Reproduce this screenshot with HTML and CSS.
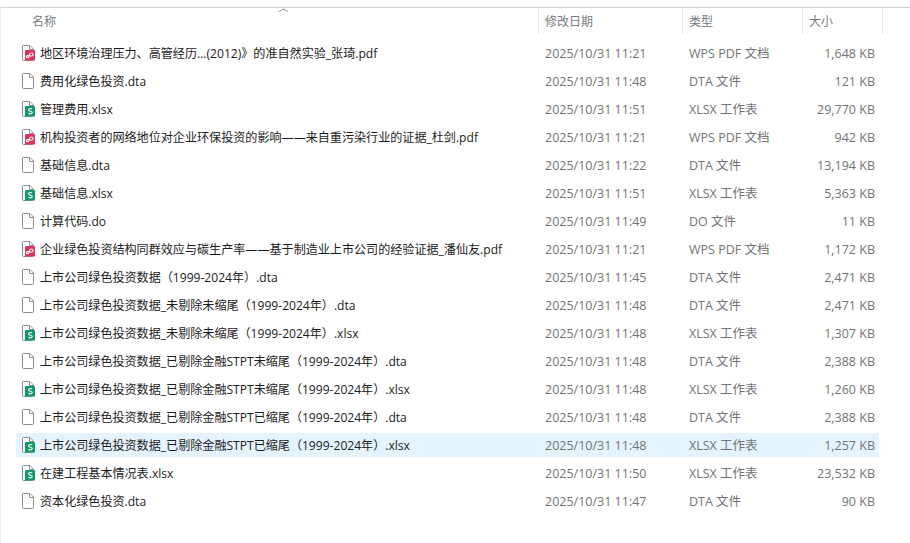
FILE: index.html
```html
<!DOCTYPE html>
<html lang="zh-CN">
<head>
  <meta charset="UTF-8">
  <title>文件列表</title>
  <link rel="stylesheet" href="styles.css">
</head>
<body>
  <svg class="defs" width="0" height="0">
    <symbol id="page" viewBox="0 0 14 16">
      <path d="M1.500 1.500a1 1 0 0 1 1-1H9L12.500 4v10.500a1 1 0 0 1-1 1h-9a1 1 0 0 1-1-1z" fill="#fff" stroke="#8e8e8e"/>
      <path d="M8.500 .5V4.500h4" fill="none" stroke="#8e8e8e"/>
    </symbol>
    <symbol id="pdf" viewBox="0 0 14 16">
      <path d="M1.500 1.500a1 1 0 0 1 1-1H9L12.500 4v10.500a1 1 0 0 1-1 1h-9a1 1 0 0 1-1-1z" fill="#fff" stroke="#8e8e8e"/>
      <path d="M8.500 .5V4.500h4" fill="none" stroke="#8e8e8e"/>
      <rect x="4" y="5" width="10" height="10.500" rx="1" fill="#e5305f"/>
      <path d="M6.500 12.800c1.600 0 1.800-1.600 2-3 .2-1 1-1.800 2-1.800s1.600.7 1.600 1.500-.7 1.500-1.600 1.500H8M6.500 12.800c-.8 0-1.200-.5-1.200-1.100s.5-1.100 1.200-1.100h1.500" fill="none" stroke="#fff" stroke-width="1.100"/>
    </symbol>
    <symbol id="xls" viewBox="0 0 14 16">
      <path d="M1.500 1.500a1 1 0 0 1 1-1H9L12.500 4v10.500a1 1 0 0 1-1 1h-9a1 1 0 0 1-1-1z" fill="#fff" stroke="#8e8e8e"/>
      <path d="M8.500 .5V4.500h4" fill="none" stroke="#8e8e8e"/>
      <rect x="4" y="5" width="10" height="10.500" rx="1" fill="#12996a"/>
      <path d="M11 8.100c-.4-.4-1-.6-1.700-.6-1 0-1.700.5-1.700 1.300 0 1.800 3.600 1 3.600 2.800 0 .8-.8 1.300-1.800 1.300-.8 0-1.500-.3-1.900-.8" fill="none" stroke="#fff" stroke-width="1.100"/>
    </symbol>
  </svg>

  <div class="window">
    <div class="header">
      <div class="col-name head-cell">名称<span class="sort"></span></div>
      <div class="col-date head-cell">修改日期</div>
      <div class="col-type head-cell">类型</div>
      <div class="col-size head-cell">大小</div>
    </div>

    <div class="rows">
      <div class="row">
        <div class="col-name"><svg class="icon"><use href="#pdf"/></svg>地区环境治理压力、高管经历...(2012)》的准自然实验_张琦.pdf</div>
        <div class="col-date">2025/10/31 11:21</div>
        <div class="col-type">WPS PDF 文档</div>
        <div class="col-size">1,648 KB</div>
      </div>
      <div class="row">
        <div class="col-name"><svg class="icon"><use href="#page"/></svg>费用化绿色投资.dta</div>
        <div class="col-date">2025/10/31 11:48</div>
        <div class="col-type">DTA 文件</div>
        <div class="col-size">121 KB</div>
      </div>
      <div class="row">
        <div class="col-name"><svg class="icon"><use href="#xls"/></svg>管理费用.xlsx</div>
        <div class="col-date">2025/10/31 11:51</div>
        <div class="col-type">XLSX 工作表</div>
        <div class="col-size">29,770 KB</div>
      </div>
      <div class="row">
        <div class="col-name"><svg class="icon"><use href="#pdf"/></svg>机构投资者的网络地位对企业环保投资的影响——来自重污染行业的证据_杜剑.pdf</div>
        <div class="col-date">2025/10/31 11:21</div>
        <div class="col-type">WPS PDF 文档</div>
        <div class="col-size">942 KB</div>
      </div>
      <div class="row">
        <div class="col-name"><svg class="icon"><use href="#page"/></svg>基础信息.dta</div>
        <div class="col-date">2025/10/31 11:22</div>
        <div class="col-type">DTA 文件</div>
        <div class="col-size">13,194 KB</div>
      </div>
      <div class="row">
        <div class="col-name"><svg class="icon"><use href="#xls"/></svg>基础信息.xlsx</div>
        <div class="col-date">2025/10/31 11:51</div>
        <div class="col-type">XLSX 工作表</div>
        <div class="col-size">5,363 KB</div>
      </div>
      <div class="row">
        <div class="col-name"><svg class="icon"><use href="#page"/></svg>计算代码.do</div>
        <div class="col-date">2025/10/31 11:49</div>
        <div class="col-type">DO 文件</div>
        <div class="col-size">11 KB</div>
      </div>
      <div class="row">
        <div class="col-name"><svg class="icon"><use href="#pdf"/></svg>企业绿色投资结构同群效应与碳生产率——基于制造业上市公司的经验证据_潘仙友.pdf</div>
        <div class="col-date">2025/10/31 11:21</div>
        <div class="col-type">WPS PDF 文档</div>
        <div class="col-size">1,172 KB</div>
      </div>
      <div class="row">
        <div class="col-name"><svg class="icon"><use href="#page"/></svg>上市公司绿色投资数据（1999-2024年）.dta</div>
        <div class="col-date">2025/10/31 11:45</div>
        <div class="col-type">DTA 文件</div>
        <div class="col-size">2,471 KB</div>
      </div>
      <div class="row">
        <div class="col-name"><svg class="icon"><use href="#page"/></svg>上市公司绿色投资数据_未剔除未缩尾（1999-2024年）.dta</div>
        <div class="col-date">2025/10/31 11:48</div>
        <div class="col-type">DTA 文件</div>
        <div class="col-size">2,471 KB</div>
      </div>
      <div class="row">
        <div class="col-name"><svg class="icon"><use href="#xls"/></svg>上市公司绿色投资数据_未剔除未缩尾（1999-2024年）.xlsx</div>
        <div class="col-date">2025/10/31 11:48</div>
        <div class="col-type">XLSX 工作表</div>
        <div class="col-size">1,307 KB</div>
      </div>
      <div class="row">
        <div class="col-name"><svg class="icon"><use href="#page"/></svg>上市公司绿色投资数据_已剔除金融STPT未缩尾（1999-2024年）.dta</div>
        <div class="col-date">2025/10/31 11:48</div>
        <div class="col-type">DTA 文件</div>
        <div class="col-size">2,388 KB</div>
      </div>
      <div class="row">
        <div class="col-name"><svg class="icon"><use href="#xls"/></svg>上市公司绿色投资数据_已剔除金融STPT未缩尾（1999-2024年）.xlsx</div>
        <div class="col-date">2025/10/31 11:48</div>
        <div class="col-type">XLSX 工作表</div>
        <div class="col-size">1,260 KB</div>
      </div>
      <div class="row">
        <div class="col-name"><svg class="icon"><use href="#page"/></svg>上市公司绿色投资数据_已剔除金融STPT已缩尾（1999-2024年）.dta</div>
        <div class="col-date">2025/10/31 11:48</div>
        <div class="col-type">DTA 文件</div>
        <div class="col-size">2,388 KB</div>
      </div>
      <div class="row selected">
        <div class="col-name"><svg class="icon"><use href="#xls"/></svg>上市公司绿色投资数据_已剔除金融STPT已缩尾（1999-2024年）.xlsx</div>
        <div class="col-date">2025/10/31 11:48</div>
        <div class="col-type">XLSX 工作表</div>
        <div class="col-size">1,257 KB</div>
      </div>
      <div class="row">
        <div class="col-name"><svg class="icon"><use href="#xls"/></svg>在建工程基本情况表.xlsx</div>
        <div class="col-date">2025/10/31 11:50</div>
        <div class="col-type">XLSX 工作表</div>
        <div class="col-size">23,532 KB</div>
      </div>
      <div class="row">
        <div class="col-name"><svg class="icon"><use href="#page"/></svg>资本化绿色投资.dta</div>
        <div class="col-date">2025/10/31 11:47</div>
        <div class="col-type">DTA 文件</div>
        <div class="col-size">90 KB</div>
      </div>
    </div>
  </div>
</body>
</html>
```

FILE: styles.css
```css
html, body {
  margin: 0;
  height: 100%;
  background: #fff;
}
body {
  font-family: "Open Sans", "Noto Sans CJK SC", sans-serif;
  font-size: 12.5px;
  line-height: 16px;
  color: #1c1c1c;
  overflow: hidden;
}
.defs {
  position: absolute;
}
.window {
  margin-top: 7px;
  height: 536px;
  box-sizing: border-box;
  border-top: 1px solid #ccd3d6;
  border-left: 1px solid #f0f0f0;
  padding-left: 15px;
}
.header {
  display: flex;
  height: 26px;
  width: 867px;
  color: #767b82;
  font-size: 12px;
}
.head-cell {
  display: flex;
  align-items: center;
  position: relative;
  padding-top: 2px;
  border-right: 1px solid #e8e8e8;
}
.header .col-name {
  width: 523px;
  padding-left: 16px;
  color: #767b82;
}
.header .col-date,
.header .col-type,
.header .col-size {
  padding-left: 6px;
}
.sort {
  position: absolute;
  left: 264px;
  top: 0;
  width: 6px;
  height: 6px;
  border-top: 1px solid #8a8a8a;
  border-left: 1px solid #8a8a8a;
  transform: scaleY(0.6) rotate(45deg);
}
.rows {
  display: flex;
  flex-direction: column;
  gap: 4px;
  margin-top: 7px;
}
.row {
  display: flex;
  align-items: center;
  height: 24px;
  box-sizing: border-box;
  padding-top: 2px;
  width: 863px;
  color: #737373;
  white-space: nowrap;
}
.row.selected {
  background: #e5f3ff;
}
.col-name {
  width: 522px;
  box-sizing: border-box;
  display: flex;
  align-items: center;
  color: #1c1c1c;
  font-size: 12.08px;
}
.row .col-name {
  padding-left: 5px;
}
.icon {
  width: 14px;
  height: 16px;
  margin-right: 5px;
  margin-bottom: 2px;
  flex: none;
}
.col-date {
  width: 144px;
  box-sizing: border-box;
  padding-left: 7px;
}
.col-type {
  width: 120px;
  box-sizing: border-box;
  padding-left: 7px;
}
.col-size {
  width: 80px;
  box-sizing: border-box;
}
.row .col-size {
  width: 77px;
  text-align: right;
  padding-right: 4px;
}
```
